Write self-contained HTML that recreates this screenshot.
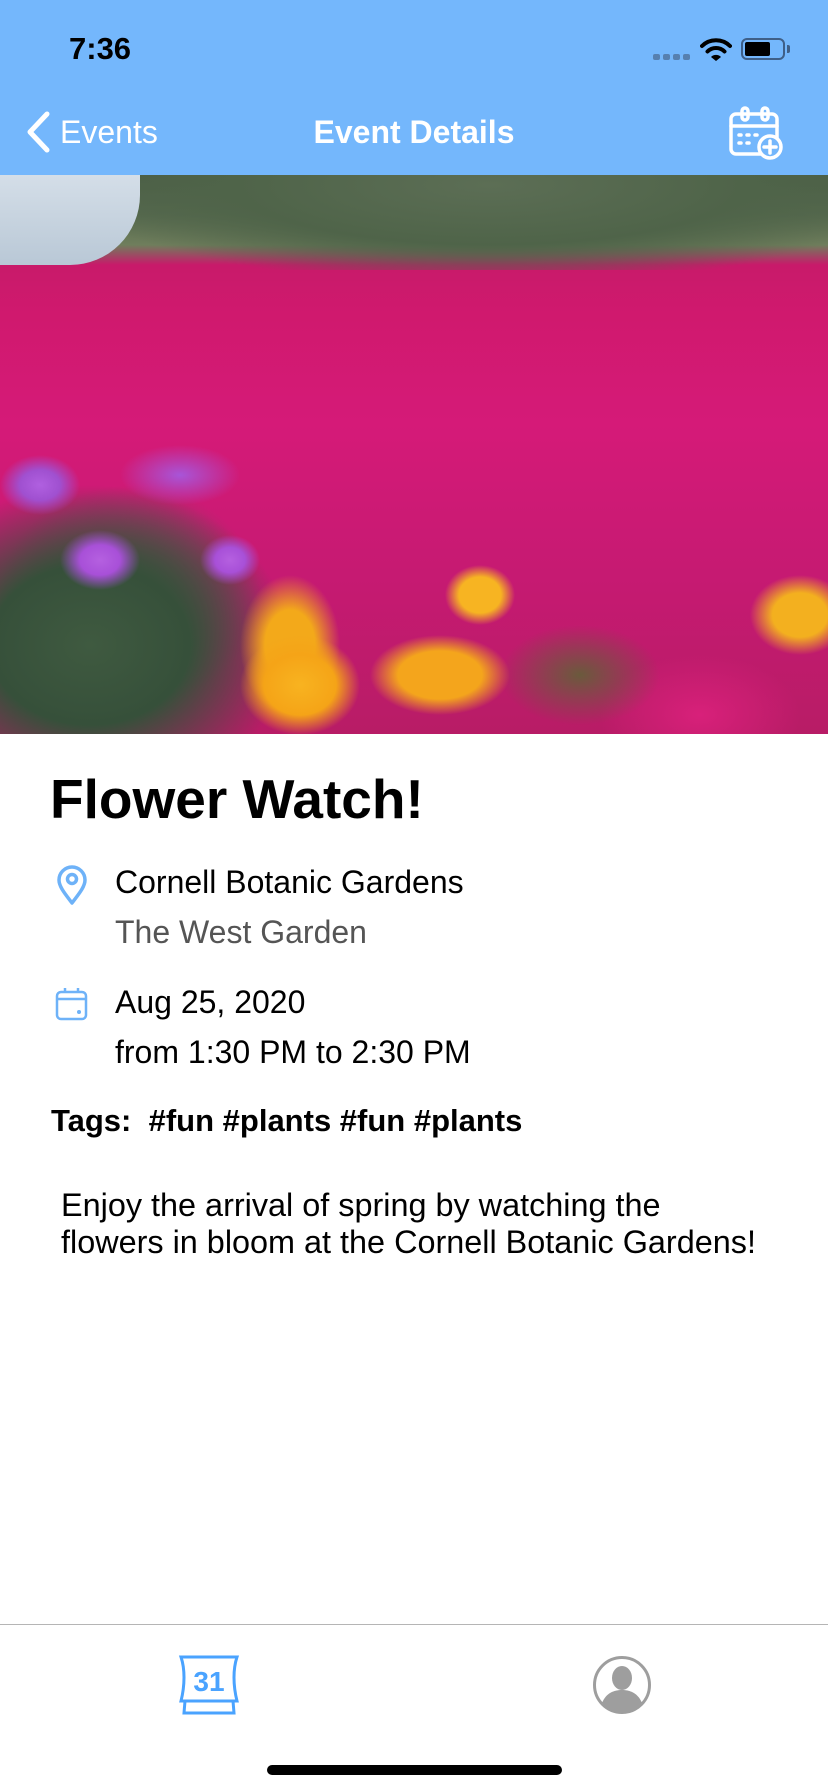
<!DOCTYPE html>
<html><head><meta charset="utf-8">
<style>
*{margin:0;padding:0;box-sizing:border-box}
body{width:828px;height:1792px;background:#fff;position:relative;overflow:hidden;font-family:"Liberation Sans",sans-serif;color:#000}
.abs{position:absolute}
.nav{left:0;top:0;width:828px;height:175px;background:#74b7fc}
.img{left:0;top:175px;width:828px;height:559px;overflow:hidden;
background:
radial-gradient(ellipse 70px 40px at 440px 500px,#f4a51c 0,#f4a51c 60%,transparent 100%),
radial-gradient(ellipse 60px 50px at 300px 510px,#f8b320 0,#f5a417 60%,transparent 100%),
radial-gradient(ellipse 50px 70px at 290px 470px,#f3a91a 0,#f3a91a 50%,transparent 100%),
radial-gradient(ellipse 35px 30px at 480px 420px,#f7b422 0,#f7b422 60%,transparent 100%),
radial-gradient(ellipse 50px 40px at 800px 440px,#f3b01f 0,#f3b01f 55%,transparent 100%),
radial-gradient(ellipse 80px 50px at 580px 500px,#6a5a3c 0,transparent 100%),
radial-gradient(ellipse 40px 30px at 100px 385px,#b560e0 0,#a850d8 50%,transparent 100%),
radial-gradient(ellipse 30px 25px at 230px 385px,#b560e0 0,#a850d8 50%,transparent 100%),
radial-gradient(ellipse 40px 30px at 40px 310px,#b060e0 0,#a050d0 50%,transparent 100%),
radial-gradient(ellipse 60px 30px at 180px 300px,#a855d8 0,transparent 100%),
radial-gradient(ellipse 200px 160px at 90px 470px,#3f5a40 0,#36503a 50%,transparent 100%),
radial-gradient(ellipse 130px 110px at 130px 420px,#445f45 0,transparent 100%),
radial-gradient(ellipse 100px 60px at 700px 540px,#d8207a 0,transparent 100%),
linear-gradient(180deg,#4a5d45 0,#56694e 40px,#6f7e5c 70px,#c81a6a 90px,#d0196e 140px,#d51a78 250px,#c61a72 400px,#b81c66 559px);}
.sky{left:0;top:175px;width:140px;height:90px;background:linear-gradient(180deg,#d4dee8,#b9c8d6);border-radius:0 0 70px 0}
.bush{left:110px;top:175px;width:718px;height:95px;background:radial-gradient(ellipse 420px 100px at 380px 10px,#5c6e55 0,#4f6449 60%,transparent 100%)}
.t{position:absolute;white-space:nowrap}
</style></head><body>
<div class="abs nav"></div>
<div class="t" style="left:69px;top:31px;font-size:31px;font-weight:bold;line-height:36px">7:36</div>
<div class="abs" style="left:653px;top:54px;width:38px;height:6px">
<div class="abs" style="left:0;top:0;width:7px;height:6px;border-radius:2px;background:#5680b0"></div>
<div class="abs" style="left:10px;top:0;width:7px;height:6px;border-radius:2px;background:#5680b0"></div>
<div class="abs" style="left:20px;top:0;width:7px;height:6px;border-radius:2px;background:#5680b0"></div>
<div class="abs" style="left:30px;top:0;width:7px;height:6px;border-radius:2px;background:#5680b0"></div>
</div>
<svg class="abs" style="left:700px;top:38px" width="32" height="24" viewBox="0 0 32 24"><path d="M2 8 A20 20 0 0 1 30 8" stroke="#000" stroke-width="4" fill="none" stroke-linecap="round"/><path d="M7.5 13.5 A12 12 0 0 1 24.5 13.5" stroke="#000" stroke-width="4" fill="none" stroke-linecap="round"/><path d="M11 19 L16 23 L21 19 A7 7 0 0 0 11 19Z" fill="#000"/></svg>
<div class="abs" style="left:741px;top:38px;width:44px;height:22px;border:2px solid #3e5f88;border-radius:6px"></div>
<div class="abs" style="left:745px;top:42px;width:25px;height:14px;background:#000;border-radius:2px"></div>
<div class="abs" style="left:787px;top:45px;width:3px;height:8px;background:#3e5f88;border-radius:0 2px 2px 0"></div>
<svg class="abs" style="left:24px;top:111px" width="28" height="42" viewBox="0 0 28 42"><path d="M23 3 L6 21 L23 39" stroke="#fff" stroke-width="5" fill="none" stroke-linecap="round" stroke-linejoin="round"/></svg>
<div class="t" style="left:60px;top:113px;font-size:32px;color:#fff;line-height:38px">Events</div>
<div class="t" style="left:0;width:828px;text-align:center;top:113px;font-size:32px;font-weight:bold;color:#fff;line-height:38px">Event Details</div>
<svg class="abs" style="left:728px;top:105px" width="56" height="56" viewBox="0 0 56 56" fill="none" stroke="#fff" stroke-width="3.5" stroke-linecap="round">
<rect x="3" y="9" width="46" height="40" rx="5"/><line x1="3" y1="21" x2="49" y2="21"/>
<rect x="14" y="3" width="6" height="12" rx="3"/><rect x="34" y="3" width="6" height="12" rx="3"/>
<line x1="11" y1="30" x2="13" y2="30"/><line x1="19" y1="30" x2="21" y2="30"/><line x1="27" y1="30" x2="29" y2="30"/>
<line x1="11" y1="38" x2="13" y2="38"/><line x1="19" y1="38" x2="21" y2="38"/>
<circle cx="42" cy="42" r="11" fill="#74b7fc"/><line x1="42" y1="36" x2="42" y2="48"/><line x1="36" y1="42" x2="48" y2="42"/></svg>
<div class="abs img"></div>
<div class="abs bush"></div>
<div class="abs sky"></div>
<div class="t" style="left:50px;top:768px;font-size:55px;font-weight:bold;line-height:62px">Flower Watch!</div>
<svg class="abs" style="left:56px;top:865px" width="32" height="40" viewBox="0 0 32 40" fill="none" stroke="#6eb2f8" stroke-width="3.5"><path d="M16 38 C10 30 3 22 3 15 A13 13 0 0 1 29 15 C29 22 22 30 16 38Z" stroke-linejoin="round"/><circle cx="16" cy="14" r="4.5"/></svg>
<div class="t" style="left:115px;top:863px;font-size:32px;line-height:38px">Cornell Botanic Gardens</div>
<div class="t" style="left:115px;top:913px;font-size:32px;line-height:38px;color:#555">The West Garden</div>
<svg class="abs" style="left:55px;top:986px" width="34" height="36" viewBox="0 0 34 36" fill="none" stroke="#6eb2f8" stroke-width="2.5"><rect x="2" y="6" width="29" height="27" rx="4"/><line x1="2" y1="13" x2="31" y2="13"/><line x1="10" y1="2" x2="10" y2="7"/><line x1="23" y1="2" x2="23" y2="7"/><circle cx="24" cy="26" r="2" fill="#6eb2f8" stroke="none"/></svg>
<div class="t" style="left:115px;top:983px;font-size:32px;line-height:38px">Aug 25, 2020</div>
<div class="t" style="left:115px;top:1033px;font-size:32px;line-height:38px">from 1:30 PM to 2:30 PM</div>
<div class="t" style="left:51px;top:1102px;font-size:31px;line-height:38px;font-weight:bold">Tags:&nbsp; #fun #plants #fun #plants</div>
<div class="t" style="left:61px;top:1187px;font-size:32.4px;line-height:37px">Enjoy the arrival of spring by watching the<br>flowers in bloom at the Cornell Botanic Gardens!</div>
<div class="abs" style="left:0;top:1624px;width:828px;height:1px;background:#b5b5b5"></div>
<svg class="abs" style="left:178px;top:1655px" width="62" height="60" viewBox="0 0 62 60" fill="none" stroke="#4aa3ff" stroke-width="3"><path d="M3 2 H59 C55 14 55 30 59 46 H3 C7 30 7 14 3 2Z"/><path d="M7 46 L6 58 H56 L55 46"/><text x="31" y="36" font-family="Liberation Sans,sans-serif" font-size="28" font-weight="bold" fill="#4aa3ff" stroke="none" text-anchor="middle">31</text></svg>
<svg class="abs" style="left:592px;top:1655px" width="60" height="60" viewBox="0 0 60 60"><circle cx="30" cy="30" r="27.5" fill="none" stroke="#9e9e9e" stroke-width="3"/><ellipse cx="30" cy="23" rx="10" ry="12" fill="#9e9e9e"/><path d="M10 48 C14 38 22 35 30 35 C38 35 46 38 50 48 C45 54 38 57 30 57 C22 57 15 54 10 48Z" fill="#9e9e9e"/></svg>
<div class="abs" style="left:267px;top:1765px;width:295px;height:10px;background:#000;border-radius:5px"></div>
</body></html>
